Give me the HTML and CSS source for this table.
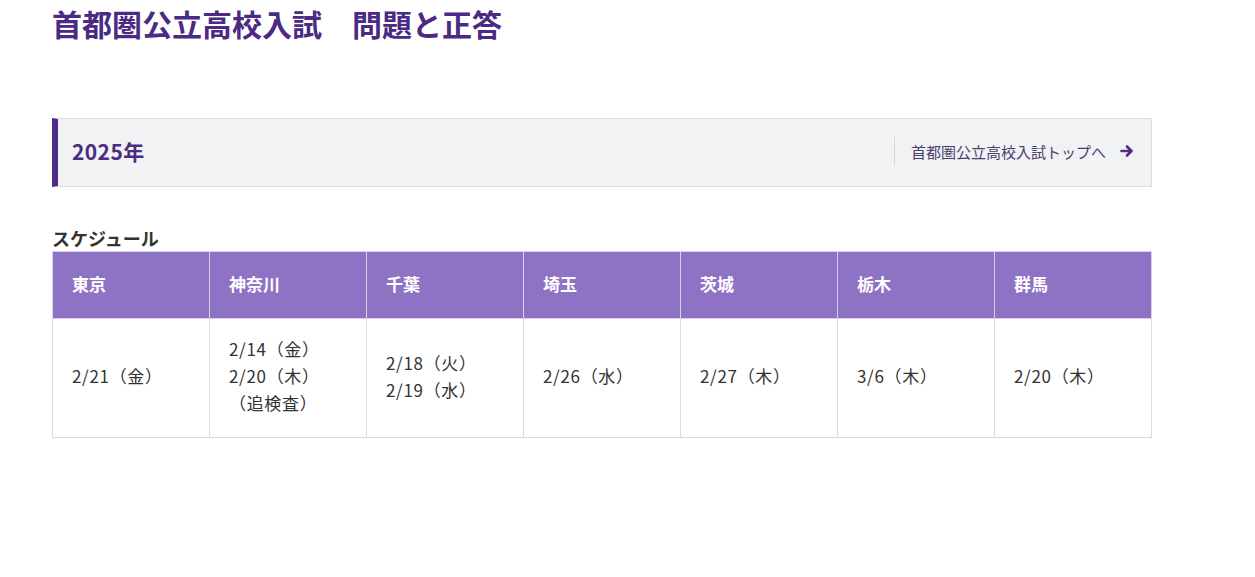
FILE: index.html
```html
<!DOCTYPE html>
<html lang="ja">
<head>
    <meta charset="UTF-8">
    <meta name="viewport" content="width=device-width, initial-scale=1.0">
    <title>首都圏公立高校入試　問題と正答</title>
    <link rel="stylesheet" href="styles.css">
</head>
<body>
    <div class="page">
        <h1 class="page-title">首都圏公立高校入試　問題と正答</h1>

        <div class="year-bar">
            <h2 class="year">2025年</h2>
            <a class="top-link" href="#">
                首都圏公立高校入試トップへ
                <svg class="arrow" viewBox="0 0 14 14" width="14" height="14" aria-hidden="true">
                    <path d="M1.5 7h9M7 2.5 11.5 7 7 11.5" fill="none" stroke="currentColor" stroke-width="2.6" stroke-linecap="round" stroke-linejoin="round"/>
                </svg>
            </a>
        </div>

        <h3 class="section-title">スケジュール</h3>
        <table class="schedule">
            <thead>
                <tr>
                    <th>東京</th>
                    <th>神奈川</th>
                    <th>千葉</th>
                    <th>埼玉</th>
                    <th>茨城</th>
                    <th>栃木</th>
                    <th>群馬</th>
                </tr>
            </thead>
            <tbody>
                <tr>
                    <td>2/21（金）</td>
                    <td>2/14（金）<br>2/20（木）<br>（追検査）</td>
                    <td>2/18（火）<br>2/19（水）</td>
                    <td>2/26（水）</td>
                    <td>2/27（木）</td>
                    <td>3/6（木）</td>
                    <td>2/20（木）</td>
                </tr>
            </tbody>
        </table>
    </div>
</body>
</html>
```

FILE: styles.css
```css
body {
    margin: 0;
    background: #fff;
    color: #333;
    font-family: "Noto Sans CJK JP", "Noto Sans", sans-serif;
}
.page {
    width: 1100px;
    padding: 0 0 0 52px;
}
.page-title {
    margin: 0;
    padding-top: 3px;
    font-size: 30px;
    line-height: 40px;
    font-weight: bold;
    color: #4b2a84;
}
.year-bar {
    margin-top: 75px;
    height: 64px;
    display: flex;
    align-items: center;
    justify-content: space-between;
    background: #f1f2f4;
    border: 1px solid #dcdcdc;
    border-left: 6px solid #4f2d86;
    padding: 0 17px 3px 14px;
}
.year {
    margin: 0;
    font-size: 21px;
    letter-spacing: 0.02em;
    font-weight: bold;
    color: #4b2c80;
}
.top-link {
    display: flex;
    align-items: center;
    gap: 14px;
    height: 28px;
    padding-left: 16px;
    border-left: 1px solid #d8d8d8;
    font-size: 15px;
    color: #4b3c6e;
    text-decoration: none;
}
.arrow {
    color: #4f2d86;
}
.section-title {
    margin: 39px 0 0;
    font-size: 18px;
    line-height: 25px;
    font-weight: bold;
    color: #333;
}
.schedule {
    width: 1100px;
    border-collapse: collapse;
    table-layout: fixed;
}
.schedule th {
    height: 62px;
    padding: 0 19px 4px;
    background: #8e72c4;
    color: #fff;
    font-size: 17px;
    font-weight: bold;
    text-align: left;
    border: 1px solid #d8d0ea;
}
.schedule td {
    height: 113px;
    padding: 0 19px 5px;
    font-size: 17px;
    letter-spacing: 0.04em;
    line-height: 27px;
    color: #333;
    border: 1px solid #dcdcdc;
    vertical-align: middle;
}
```
